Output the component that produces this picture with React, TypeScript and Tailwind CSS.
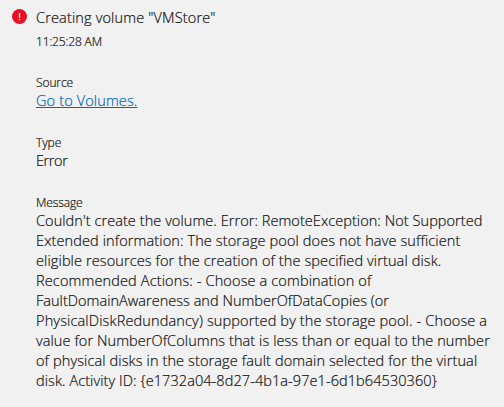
import { FC, ReactNode } from "react";

interface DetailProps {
  label: string;
  children: ReactNode;
}

const Detail: FC<DetailProps> = ({ label, children }) => (
  <div className="mt-6">
    <dt className="text-[12px] leading-4 tracking-[-0.1px]">{label}</dt>
    <dd className="text-[14.5px] leading-5">{children}</dd>
  </div>
);

const MESSAGE_LINES = [
  { text: "Couldn't create the volume. Error: RemoteException: Not Supported", tracking: "tracking-[0.065px]" },
  { text: "Extended information: The storage pool does not have sufficient", tracking: "tracking-[0.12px]" },
  { text: "eligible resources for the creation of the specified virtual disk.", tracking: "tracking-[0.11px]" },
  { text: "Recommended Actions: - Choose a combination of", tracking: "tracking-[0.14px]" },
  { text: "FaultDomainAwareness and NumberOfDataCopies (or", tracking: "tracking-[0.03px]" },
  { text: "PhysicalDiskRedundancy) supported by the storage pool. - Choose a", tracking: "tracking-[0.15px]" },
  { text: "value for NumberOfColumns that is less than or equal to the number", tracking: "tracking-[0.08px]" },
  { text: "of physical disks in the storage fault domain selected for the virtual", tracking: "tracking-[0.12px]" },
  { text: "disk. Activity ID: {e1732a04-8d27-4b1a-97e1-6d1b64530360}", tracking: "tracking-[0.08px]" },
];

const App: FC = () => {
  return (
    <main className="flex h-[407px] w-[504px] bg-[#f1f1f1] pt-2 pl-3 font-['Open_Sans',sans-serif] font-light text-[#111] [-webkit-text-stroke:0.2px]">
      <svg className="mt-px mr-[9px] size-[15px] shrink-0" viewBox="0 0 15 15">
        <circle cx="7.5" cy="7.5" r="7.5" fill="#e81123" />
        <path d="M7.5 4v5M7.5 10v1.2" stroke="#fff" strokeWidth="1.2" />
      </svg>
      <div>
        <h1 className="text-[14.5px] leading-5 tracking-[0.15px]">Creating volume "VMStore"</h1>
        <p className="mt-[6px] text-[12px] leading-4 tracking-[-0.15px]">11:25:28 AM</p>
        <dl className="mt-[25px]">
          <Detail label="Source">
            <a href="#" className="tracking-[0.13px] text-[#0067b8] underline">
              Go to Volumes.
            </a>
          </Detail>
          <Detail label="Type">
            <span className="tracking-[-0.4px]">Error</span>
          </Detail>
          <Detail label="Message">
            {MESSAGE_LINES.map(({ text, tracking }) => (
              <span key={text} className={`block whitespace-nowrap ${tracking}`}>
                {text}
              </span>
            ))}
          </Detail>
        </dl>
      </div>
    </main>
  );
};

export default App;
